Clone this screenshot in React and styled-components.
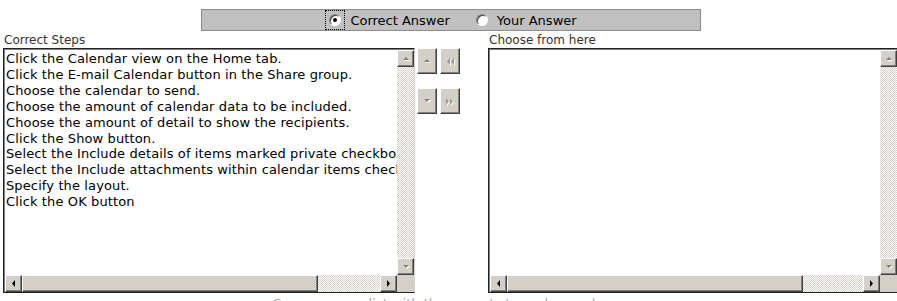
import React from 'react';
import styled, { createGlobalStyle, css } from 'styled-components';

const GlobalStyle = createGlobalStyle`
  body {
    margin: 0;
    background: #fff;
    font-family: "DejaVu Sans", Verdana, sans-serif;
  }
`;

const face = '#d4d0c8';

const raised = css`
  background: ${face};
  border-style: solid;
  border-width: 1px;
  border-color: #fff #404040 #404040 #fff;
  box-shadow: inset -1px -1px 0 #808080, inset 1px 1px 0 ${face};
  box-sizing: border-box;
`;

const checker = css`
  background-color: #fff;
  background-image: repeating-conic-gradient(${face} 0 25%, #fff 0 50%);
  background-size: 2px 2px;
`;

const Page = styled.div`
  width: 897px;
  height: 301px;
  overflow: hidden;
  padding: 9px 0 0 3px;
  box-sizing: border-box;
`;

const RadioBar = styled.div`
  margin-left: 198px;
  width: 500px;
  height: 22px;
  box-sizing: border-box;
  background: #c0c0c0;
  border: 1px solid #8c8c8c;
  display: flex;
  align-items: center;
  justify-content: center;
  font-size: 13px;
  color: #000;
`;

const Choice = styled.label`
  display: flex;
  align-items: center;
  margin: 0 ${(p) => (p.$last ? 0 : 11)}px 0 ${(p) => (p.$last ? 11 : 0)}px;
  gap: 5px;
`;

const Focus = styled.span`
  display: flex;
  align-items: center;
  justify-content: center;
  width: 20px;
  height: 20px;
  box-sizing: border-box;
  border: 1px dotted ${(p) => (p.$on ? '#000' : 'transparent')};
`;

const Dot = styled.span`
  width: 12px;
  height: 12px;
  border-radius: 50%;
  box-sizing: border-box;
  background: #fff;
  border: 1px solid;
  border-color: #808080 #fff #fff #808080;
  box-shadow: inset 1px 1px 0 #404040;
  position: relative;
  &::after {
    content: '';
    display: ${(p) => (p.$on ? 'block' : 'none')};
    position: absolute;
    left: 3px;
    top: 3px;
    width: 4px;
    height: 4px;
    border-radius: 50%;
    background: #000;
  }
`;

const Workspace = styled.div`
  display: flex;
  align-items: flex-start;
  margin-top: 1px;
`;

const Panel = styled.div`
  display: flex;
  flex-direction: column;
`;

const Caption = styled.div`
  font-size: 12px;
  line-height: 16px;
  color: #333;
  padding-left: 1px;
`;

const ListBox = styled.div`
  width: ${(p) => p.$width}px;
  height: 245px;
  box-sizing: border-box;
  border: 1px solid #222;
  border-right-color: #d4d0c8;
  box-shadow: inset 1px 1px 0 #808080;
  display: grid;
  grid-template-columns: 1fr 17px;
  grid-template-rows: 1fr 17px;
  padding: 1px 0 0 1px;
  background: #fff;
`;

const Items = styled.div`
  overflow: hidden;
  padding: 1px 0 0 1px;
  font-size: 13px;
  letter-spacing: 0.12px;
  line-height: 15.9px;
  color: #000;
  white-space: nowrap;
`;

const VBar = styled.div`
  display: flex;
  flex-direction: column;
`;

const HBar = styled.div`
  display: flex;
`;

const Track = styled.div`
  flex: 1;
  ${checker}
`;

const Thumb = styled.div`
  ${raised}
  width: ${(p) => p.$size}px;
`;

const SBtn = styled.div`
  ${raised}
  width: 17px;
  height: 17px;
  flex: none;
  display: flex;
  align-items: center;
  justify-content: center;
`;

const Corner = styled.div`
  background: ${face};
`;

const Movers = styled.div`
  display: grid;
  grid-template-columns: 20px 20px;
  grid-auto-rows: 26px;
  column-gap: 3px;
  row-gap: 14px;
  margin: 16px 28px 0 2px;
`;

const MoveBtn = styled.div`
  ${raised}
  display: flex;
  align-items: center;
  justify-content: center;
`;

const Footer = styled.div`
  margin-top: 3px;
  text-align: center;
  font-size: 13px;
  color: #aaa;
`;

const Arrow = ({ dir, off }) => {
  const fill = off ? '#808080' : '#000';
  const shapes = {
    up: '1,5 4,2 7,5',
    down: '1,2 4,5 7,2',
    left: '5,0 2,3.5 5,7',
    right: '2,0 5,3.5 2,7',
  };
  return (
    <svg width="8" height="8" viewBox="0 0 8 8">
      {off && <polygon points={shapes[dir]} fill="#fff" transform="translate(1 1)" />}
      <polygon points={shapes[dir]} fill={fill} />
    </svg>
  );
};

const Double = ({ dir }) => (
  <svg width="10" height="9" viewBox="0 0 10 9">
    {dir === 'left' ? (
      <g>
        <polygon points="5,1 2,4.5 5,8" fill="#fff" transform="translate(1 1)" />
        <polygon points="9,1 6,4.5 9,8" fill="#fff" transform="translate(1 1)" />
        <polygon points="5,1 2,4.5 5,8" fill="#999" />
        <polygon points="9,1 6,4.5 9,8" fill="#999" />
      </g>
    ) : (
      <g>
        <polygon points="1,1 4,4.5 1,8" fill="#fff" transform="translate(1 1)" />
        <polygon points="5,1 8,4.5 5,8" fill="#fff" transform="translate(1 1)" />
        <polygon points="1,1 4,4.5 1,8" fill="#999" />
        <polygon points="5,1 8,4.5 5,8" fill="#999" />
      </g>
    )}
  </svg>
);

function StepList({ width, items, thumb }) {
  return (
    <ListBox $width={width}>
      <Items>
        {items.map((item, i) => (
          <div key={i}>{item}</div>
        ))}
      </Items>
      <VBar>
        <SBtn>
          <Arrow dir="up" off />
        </SBtn>
        <Track />
        <SBtn>
          <Arrow dir="down" off />
        </SBtn>
      </VBar>
      <HBar>
        <SBtn>
          <Arrow dir="left" />
        </SBtn>
        <Thumb $size={thumb} />
        <Track />
        <SBtn>
          <Arrow dir="right" />
        </SBtn>
      </HBar>
      <Corner />
    </ListBox>
  );
}

const steps = [
  'Click the Calendar view on the Home tab.',
  'Click the E-mail Calendar button in the Share group.',
  'Choose the calendar to send.',
  'Choose the amount of calendar data to be included.',
  'Choose the amount of detail to show the recipients.',
  'Click the Show button.',
  'Select the Include details of items marked private checkbox.',
  'Select the Include attachments within calendar items checkbox.',
  'Specify the layout.',
  'Click the OK button',
];

export default function App() {
  return (
    <>
      <GlobalStyle />
      <Page>
        <RadioBar>
          <Choice>
            <Focus $on>
              <Dot $on />
            </Focus>
            Correct Answer
          </Choice>
          <Choice $last>
            <Focus>
              <Dot />
            </Focus>
            Your Answer
          </Choice>
        </RadioBar>
        <Workspace>
          <Panel>
            <Caption>Correct Steps</Caption>
            <StepList width={412} items={steps} thumb={296} />
          </Panel>
          <Movers>
            <MoveBtn>
              <Arrow dir="up" off />
            </MoveBtn>
            <MoveBtn>
              <Double dir="left" />
            </MoveBtn>
            <MoveBtn>
              <Arrow dir="down" off />
            </MoveBtn>
            <MoveBtn>
              <Double dir="right" />
            </MoveBtn>
          </Movers>
          <Panel>
            <Caption>Choose from here</Caption>
            <StepList width={410} items={[]} thumb={296} />
          </Panel>
        </Workspace>
        <Footer>Compare your list with the correct steps shown above.</Footer>
      </Page>
    </>
  );
}
